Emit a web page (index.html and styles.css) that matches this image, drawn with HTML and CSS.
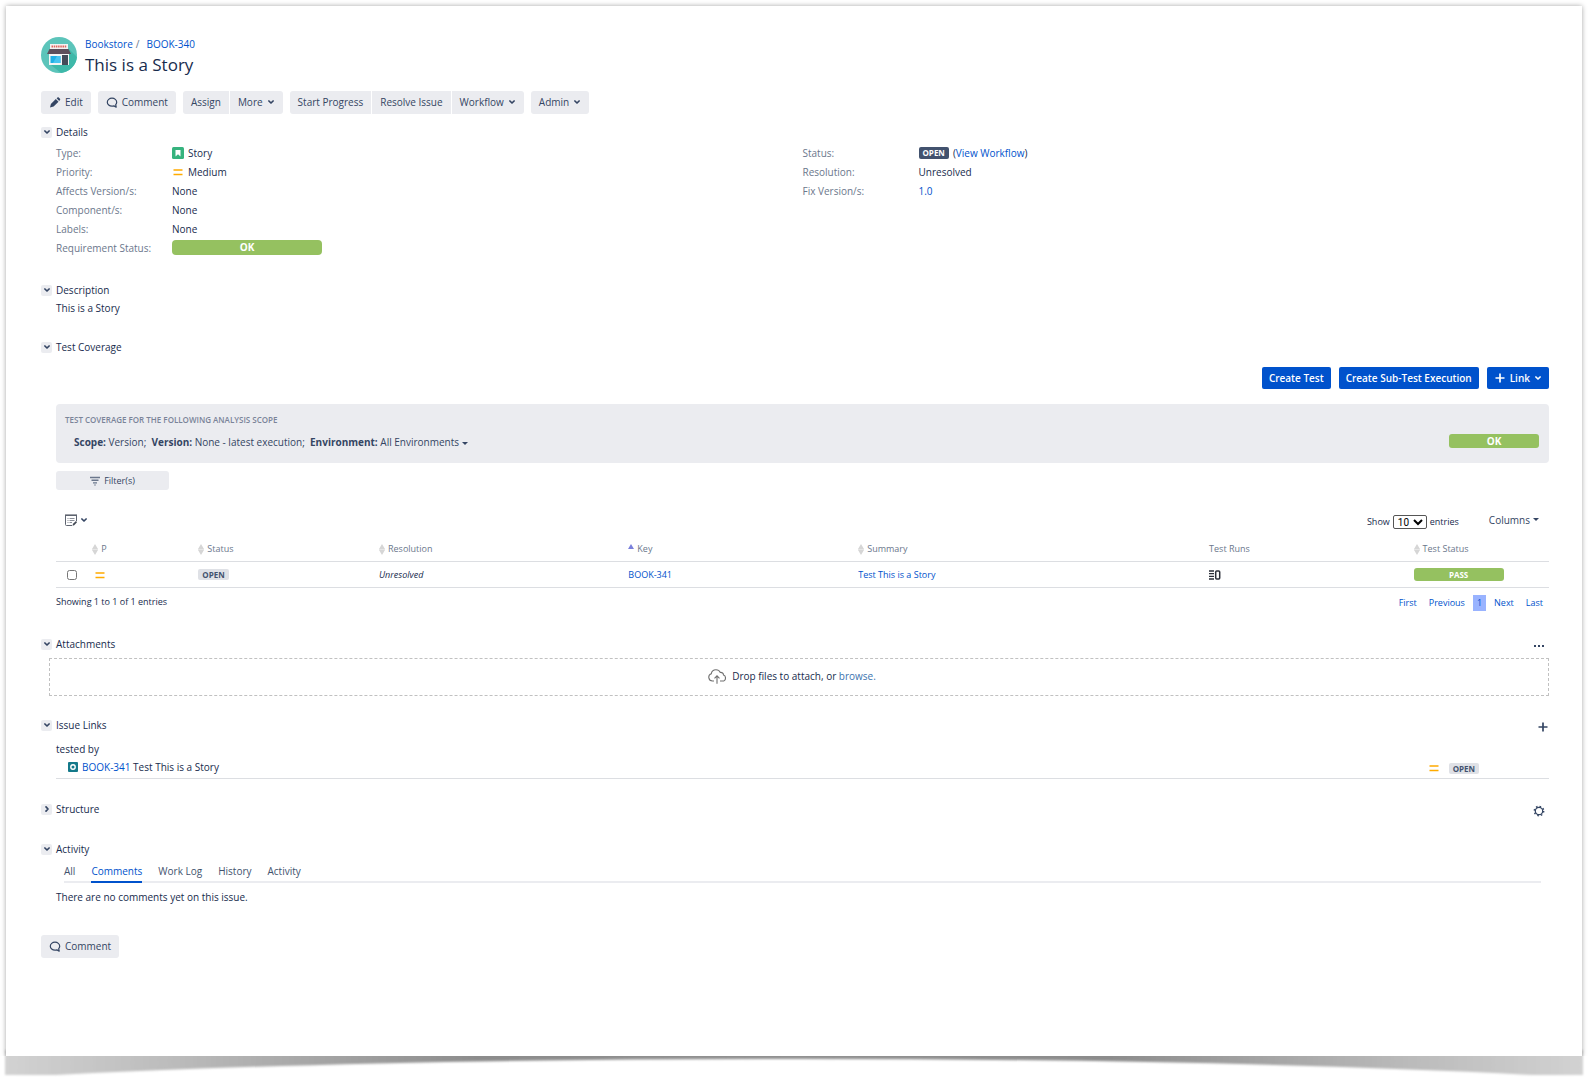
FILE: index.html
```html
<!DOCTYPE html>
<html lang="en">
<head>
  <meta charset="utf-8">
  <title>BOOK-340 This is a Story</title>
  <meta name="viewport" content="width=device-width, initial-scale=1.0">
  <link rel="stylesheet" href="styles.css">
</head>
<body>
  <!-- shared icons -->
  <svg class="sprite" aria-hidden="true">
    <symbol id="i-down" viewBox="0 0 8 8"><path d="M1.900 3 4 5l2.100-2" fill="none" stroke="currentColor" stroke-width="1.700" stroke-linecap="round" stroke-linejoin="round"/></symbol>
    <symbol id="i-right" viewBox="0 0 8 8"><path d="M3 1.900 5 4 3 6.100" fill="none" stroke="currentColor" stroke-width="1.700" stroke-linecap="round" stroke-linejoin="round"/></symbol>
    <symbol id="i-medium" viewBox="0 0 12 12"><path d="M1.500 4h9M1.500 8.500h9" stroke="#ffab00" stroke-width="1.500"/></symbol>
    <symbol id="i-comment" viewBox="0 0 12 12"><path d="M6 2.200c2.600 0 4.700 1.700 4.700 4 0 1-.4 1.800-1 2.500l.5 2.400-2.300-1.200c-.6.200-1.200.3-1.900.3-2.600 0-4.700-1.700-4.700-4s2.100-4 4.700-4z" fill="none" stroke="currentColor" stroke-width="1.200" stroke-linejoin="round"/></symbol>
    <symbol id="i-sort" viewBox="0 0 6 11"><path d="M3 0l3 5H0zM3 11l3-5H0z" fill="#d6d6d6"/><path d="M0 5.500h6" stroke="#e6e6e6"/></symbol>
    <symbol id="i-plus" viewBox="0 0 12 12"><path d="M6 1.500v9M1.500 6h9" stroke="currentColor" stroke-width="1.700"/></symbol>
  </svg>

  <div class="sheet">
    <header class="issue-header">
      <svg class="avatar" viewBox="0 0 36 36">
        <circle cx="18" cy="18" r="18" fill="#5cc4ba"/>
        <path d="M28 12l8 8a18 18 0 0 1-16 16l-10-8z" fill="#3eb8a9"/>
        <rect x="9" y="7" width="18" height="5" fill="#f2f2f2"/>
        <path d="M10.500 9.500h15" stroke="#e0645c" stroke-width="2" stroke-dasharray="1.500 .7"/>
        <rect x="8" y="16" width="20" height="12" fill="#f4f5f5"/>
        <path d="M8.500 12h19l2.500 5H6z" fill="#5d4f5c"/>
        <rect x="9.500" y="19" width="10" height="7" fill="#1fb0e6"/>
        <path d="M16 19h3.500v7H12z" fill="#48c4f0"/>
        <rect x="21" y="18" width="6" height="10" fill="#434b59"/>
      </svg>
      <div>
        <nav class="crumbs"><a href="#">Bookstore</a><span>/</span><a href="#">BOOK-340</a></nav>
        <h1>This is a Story</h1>
      </div>
    </header>

    <div class="toolbar">
      <div class="group">
        <button class="btn"><svg class="ic12" viewBox="0 0 12 12"><path d="M1 11.500l.9-3.600 4.900-4.900 2.700 2.700-4.900 4.900zM7.600 2.300l.9-.8c.4-.4.800-.4 1.200 0L11 2.800c.4.400.4.800 0 1.200l-.8.900z" fill="currentColor"/></svg>Edit</button>
      </div>
      <div class="group">
        <button class="btn"><svg class="ic12"><use href="#i-comment"/></svg>Comment</button>
      </div>
      <div class="group">
        <button class="btn">Assign</button>
        <button class="btn">More <svg class="ic8"><use href="#i-down"/></svg></button>
      </div>
      <div class="group">
        <button class="btn">Start Progress</button>
        <button class="btn">Resolve Issue</button>
        <button class="btn">Workflow <svg class="ic8"><use href="#i-down"/></svg></button>
      </div>
      <div class="group">
        <button class="btn">Admin <svg class="ic8"><use href="#i-down"/></svg></button>
      </div>
    </div>

    <section class="module details">
      <div class="module-head">
        <button class="toggle" aria-label="Toggle Details"><svg class="ic8"><use href="#i-down"/></svg></button>
        <h2>Details</h2>
      </div>
      <div class="module-body fields">
        <dl>
          <dt>Type:</dt>
          <dd><svg class="ic12" viewBox="0 0 12 12"><rect width="12" height="12" rx="1.500" fill="#36b37e"/><path d="M3.500 3h5v6.500L6 7.200 3.500 9.500z" fill="#fff"/></svg>Story</dd>
          <dt>Priority:</dt>
          <dd><svg class="ic12"><use href="#i-medium"/></svg>Medium</dd>
          <dt>Affects Version/s:</dt>
          <dd>None</dd>
          <dt>Component/s:</dt>
          <dd>None</dd>
          <dt>Labels:</dt>
          <dd>None</dd>
          <dt>Requirement Status:</dt>
          <dd><span class="bar bar-req">OK</span></dd>
        </dl>
        <dl>
          <dt>Status:</dt>
          <dd><span class="lozenge dark">OPEN</span><span>(<a href="#">View Workflow</a>)</span></dd>
          <dt>Resolution:</dt>
          <dd>Unresolved</dd>
          <dt>Fix Version/s:</dt>
          <dd><a href="#">1.0</a></dd>
        </dl>
      </div>
    </section>

    <section class="module description">
      <div class="module-head">
        <button class="toggle" aria-label="Toggle Description"><svg class="ic8"><use href="#i-down"/></svg></button>
        <h2>Description</h2>
      </div>
      <p class="module-body">This is a Story</p>
    </section>

    <section class="module coverage">
      <div class="module-head">
        <button class="toggle" aria-label="Toggle Test Coverage"><svg class="ic8"><use href="#i-down"/></svg></button>
        <h2>Test Coverage</h2>
      </div>
      <div class="module-body">
        <div class="actions">
          <button class="btn primary">Create Test</button>
          <button class="btn primary">Create Sub-Test Execution</button>
          <button class="btn primary"><svg class="ic12"><use href="#i-plus"/></svg>Link <svg class="ic8"><use href="#i-down"/></svg></button>
        </div>

        <div class="scope">
          <div>
            <h3>Test coverage for the following analysis scope</h3>
            <p><b>Scope:</b> Version;&nbsp; <b>Version:</b> None - latest execution;&nbsp; <b>Environment:</b> All Environments <i class="caret"></i></p>
          </div>
          <span class="bar">OK</span>
        </div>

        <button class="btn filter"><svg class="ic10" viewBox="0 0 10 10"><path d="M0 1.500h10M1.500 4.200h7M3 6.900h4" stroke="#6b778c" stroke-width="1.400"/><path d="M4.200 9h1.600" stroke="#6b778c"/></svg>Filter(s)</button>

        <div class="table-tools">
          <button class="plain" aria-label="Bulk actions">
            <svg class="ic12" viewBox="0 0 12 12"><path d="M7 11.500H1.500a1 1 0 0 1-1-1V1.500h11V7" fill="none" stroke="#5e6470"/><path d="M0 1.200h12" stroke="#5e6470" stroke-width="1.600"/><path d="M2.500 4.500h1M4.500 4.500h5M2.500 6.500h1M4.500 6.500h5M2.500 8.500h1M4.500 8.500h2.500" stroke="#8a8f99"/><path d="M7.500 11.800l.5-2 3-2.800 1 1.200-2.800 3z" fill="#444a55"/></svg>
            <svg class="ic8"><use href="#i-down"/></svg>
          </button>
          <div class="table-opts">
            <label>Show <select><option>10</option><option>25</option><option>50</option></select> entries</label>
            <button class="plain">Columns <i class="caret"></i></button>
          </div>
        </div>

        <table class="tests">
          <colgroup>
            <col class="c-check"><col class="c-p"><col class="c-status"><col class="c-res"><col class="c-key"><col class="c-sum"><col class="c-runs"><col>
          </colgroup>
          <thead>
            <tr>
              <th></th>
              <th><svg class="sort"><use href="#i-sort"/></svg>P</th>
              <th><svg class="sort"><use href="#i-sort"/></svg>Status</th>
              <th><svg class="sort"><use href="#i-sort"/></svg>Resolution</th>
              <th><svg class="sort" viewBox="0 0 6 11"><path d="M3 0l3 5H0z" fill="#7a80dc"/></svg>Key</th>
              <th><svg class="sort"><use href="#i-sort"/></svg>Summary</th>
              <th>Test Runs</th>
              <th><svg class="sort"><use href="#i-sort"/></svg>Test Status</th>
            </tr>
          </thead>
          <tbody>
            <tr>
              <td><input type="checkbox" aria-label="Select BOOK-341"></td>
              <td><svg class="ic12"><use href="#i-medium"/></svg></td>
              <td><span class="lozenge">OPEN</span></td>
              <td><em>Unresolved</em></td>
              <td><a href="#">BOOK-341</a></td>
              <td><a href="#">Test This is a Story</a></td>
              <td><svg class="ic12" viewBox="0 0 12 12"><path d="M0 2h5M0 4.700h5M0 7.400h5M0 10h5" stroke="#2b2f38" stroke-width="1.300"/><rect x="6.700" y="2" width="4" height="8" rx="1" fill="none" stroke="#2b2f38" stroke-width="1.500"/></svg></td>
              <td><span class="bar small">PASS</span></td>
            </tr>
          </tbody>
        </table>

        <div class="table-foot">
          <span>Showing 1 to 1 of 1 entries</span>
          <nav class="pager"><a href="#">First</a><a href="#">Previous</a><a href="#" class="current">1</a><a href="#">Next</a><a href="#">Last</a></nav>
        </div>
      </div>
    </section>

    <section class="module attachments">
      <div class="module-head">
        <button class="toggle" aria-label="Toggle Attachments"><svg class="ic8"><use href="#i-down"/></svg></button>
        <h2>Attachments</h2>
        <button class="plain op" aria-label="Attachment options"><svg class="ic12" viewBox="0 0 12 12"><path d="M1 6h2M5 6h2M9 6h2" stroke="currentColor" stroke-width="2"/></svg></button>
      </div>
      <div class="dropzone">
        <svg class="cloud" viewBox="0 0 18 15"><path d="M6 12H4.500A3.700 3.700 0 0 1 3.300 4.800C3.600 2.300 5.600.700 8 .7c2 0 3.500 1 4.200 2.700 2-.2 3.300 1 3.300 2.700 1.200.4 2 1.500 2 2.800 0 1.800-1.300 3.100-3 3.100H12M9 14.800V7M6.500 9.300 9 6.800l2.500 2.500" fill="none" stroke="#707070" stroke-width="1.100"/></svg>
        <span>Drop files to attach, or <a href="#">browse.</a></span>
      </div>
    </section>

    <section class="module links">
      <div class="module-head">
        <button class="toggle" aria-label="Toggle Issue Links"><svg class="ic8"><use href="#i-down"/></svg></button>
        <h2>Issue Links</h2>
        <button class="plain op edge" aria-label="Add link"><svg class="ic12"><use href="#i-plus"/></svg></button>
      </div>
      <div class="module-body">
        <h3>tested by</h3>
        <div class="link-row">
          <svg class="ic10" viewBox="0 0 10 10"><rect width="10" height="10" rx="1" fill="#14798a"/><circle cx="5" cy="5" r="2.200" fill="none" stroke="#fff" stroke-width="1.400"/></svg>
          <span><a href="#">BOOK-341</a> Test This is a Story</span>
          <div class="link-state">
            <svg class="ic12"><use href="#i-medium"/></svg>
            <span class="lozenge">OPEN</span>
          </div>
        </div>
      </div>
    </section>

    <section class="module structure">
      <div class="module-head">
        <button class="toggle" aria-label="Toggle Structure"><svg class="ic8"><use href="#i-right"/></svg></button>
        <h2>Structure</h2>
        <button class="plain op" aria-label="Structure settings"><svg class="ic12" viewBox="0 0 12 12"><circle cx="6" cy="6" r="3.700" fill="none" stroke="currentColor" stroke-width="1.200"/><circle cx="6" cy="6" r="4.700" fill="none" stroke="currentColor" stroke-width="1.400" stroke-dasharray="1.600 2.090"/></svg></button>
      </div>
    </section>

    <section class="module activity">
      <div class="module-head">
        <button class="toggle" aria-label="Toggle Activity"><svg class="ic8"><use href="#i-down"/></svg></button>
        <h2>Activity</h2>
      </div>
      <div class="module-body">
        <nav class="tabs"><a href="#">All</a><a href="#" class="active">Comments</a><a href="#">Work Log</a><a href="#">History</a><a href="#">Activity</a></nav>
        <p>There are no comments yet on this issue.</p>
      </div>
    </section>

    <button class="btn"><svg class="ic12"><use href="#i-comment"/></svg>Comment</button>
  </div>

  <!-- lifted page shadow -->
  <svg class="curl" viewBox="0 0 1576 29" preserveAspectRatio="none" aria-hidden="true">
    <defs>
      <linearGradient id="curl-fill">
        <stop offset="0" stop-color="#d2d2d2"/>
        <stop offset=".1" stop-color="#bdbdbd"/>
        <stop offset=".3" stop-color="#8c8c8c"/>
        <stop offset=".5" stop-color="#929292"/>
        <stop offset=".7" stop-color="#8c8c8c"/>
        <stop offset=".9" stop-color="#bdbdbd"/>
        <stop offset="1" stop-color="#d2d2d2"/>
      </linearGradient>
      <filter id="soft" x="-1%" y="-40%" width="102%" height="180%"><feGaussianBlur stdDeviation="1.300"/></filter>
    </defs>
    <path d="M-1 -6H1577V19H1526Q1216 3 788 3Q360 3 50 19H-1z" fill="url(#curl-fill)" filter="url(#soft)"/>
  </svg>
</body>
</html>
```
FILE: styles.css
```css
* {
  box-sizing: border-box;
}
body {
  margin: 0;
  padding: 6px 14px 0 6px;
  background: #fff;
  font-family: "Open Sans", "Noto Sans", sans-serif;
  font-size: 10px;
  line-height: 18px;
  color: #172b4d;
}
h1, h2, h3, p, dl, dd {
  margin: 0;
}
a {
  color: #0052cc;
  text-decoration: none;
}
svg {
  flex: none;
}
.sprite {
  position: absolute;
  width: 0;
  height: 0;
}
.ic8 { width: 8px; height: 8px; }
.ic10 { width: 10px; height: 10px; }
.ic12 { width: 12px; height: 12px; }

.sheet {
  position: relative;
  z-index: 1;
  padding: 31px 33px 98px 35px;
  background: #fff;
  box-shadow: 0 0 5px rgba(0, 0, 0, 0.35);
  clip-path: inset(-6px -6px 0 -6px);
}
.curl {
  display: block;
  width: 100%;
  height: 29px;
  overflow: visible;
}

/* header */
.issue-header {
  display: flex;
  gap: 8px;
}
.avatar {
  width: 36px;
  height: 36px;
}
.crumbs {
  display: flex;
  gap: 3px;
  line-height: 14px;
}
.crumbs span {
  color: #6b778c;
}
.crumbs a:last-child {
  margin-left: 4px;
}
h1 {
  font-size: 17px;
  font-weight: 500;
  line-height: 28px;
}

/* buttons */
.btn {
  display: inline-flex;
  align-items: center;
  justify-content: center;
  gap: 4px;
  height: 23px;
  padding: 0 8px 2px;
  border: 0;
  border-radius: 3px;
  background: #ebecf0;
  font: inherit;
  color: #344563;
  cursor: pointer;
}
.btn.primary {
  height: 22px;
  padding: 0 7px;
  border-radius: 2px;
  background: #0052cc;
  color: #fff;
  font-weight: 600;
}
.plain {
  display: inline-flex;
  align-items: center;
  gap: 3px;
  padding: 0;
  border: 0;
  background: none;
  font: inherit;
  color: #344563;
  cursor: pointer;
}
.toolbar {
  display: flex;
  gap: 7px;
  margin-top: 12px;
}
.group {
  display: flex;
  gap: 1px;
}
.group .btn:not(:first-child) {
  border-top-left-radius: 0;
  border-bottom-left-radius: 0;
}
.group .btn:not(:last-child) {
  border-top-right-radius: 0;
  border-bottom-right-radius: 0;
}

/* modules */
.module-head {
  display: flex;
  align-items: center;
  gap: 4px;
}
.module-head h2 {
  font-size: 10px;
  font-weight: 500;
}
.toggle {
  display: flex;
  align-items: center;
  justify-content: center;
  width: 11px;
  height: 11px;
  padding: 0;
  border: 0;
  border-radius: 2px;
  background: #ebecf0;
  color: #344563;
}
.op {
  margin-left: auto;
  margin-right: 4px;
  padding-top: 4px;
}
.op.edge {
  margin-right: 0;
}
.module-body {
  margin-left: 15px;
}
.details {
  margin-top: 9px;
}
.description {
  margin-top: 24px;
}
.coverage {
  margin-top: 21px;
}
.attachments {
  margin-top: 23px;
}
.links {
  margin-top: 20px;
}
.structure {
  margin-top: 21px;
}
.activity {
  margin-top: 22px;
  margin-bottom: 29px;
}

.fields {
  display: grid;
  grid-template-columns: 1fr 1fr;
  align-items: start;
  padding-top: 2px;
}
.fields dl {
  display: grid;
  grid-template-columns: 116px 1fr;
  grid-auto-rows: 19px;
  align-items: center;
}
.fields dt {
  color: #6b778c;
}
.fields dd {
  display: flex;
  align-items: center;
  gap: 4px;
}

.lozenge {
  display: inline-block;
  padding: 0 4px;
  border-radius: 2px;
  background: #dfe1e6;
  color: #42526e;
  font-size: 8px;
  font-weight: 700;
  line-height: 11px;
}
.lozenge.dark {
  background: #42526e;
  color: #fff;
  line-height: 12px;
}
.bar {
  display: block;
  width: 90px;
  border-radius: 3px;
  background: #95c160;
  color: #fff;
  font-weight: 700;
  line-height: 14px;
  text-align: center;
}
.bar.bar-req {
  width: 150px;
  border-radius: 4px;
  line-height: 15px;
}
.bar.small {
  font-size: 8px;
  line-height: 13px;
}
.caret {
  display: inline-block;
  border: 3px solid transparent;
  border-top-color: currentColor;
  border-bottom: 0;
  vertical-align: middle;
}

/* test coverage */
.actions {
  display: flex;
  justify-content: flex-end;
  gap: 8px;
  margin-top: 11px;
}
.scope {
  display: flex;
  align-items: flex-start;
  justify-content: space-between;
  margin-top: 15px;
  padding: 9px 10px 12px 9px;
  border-radius: 4px;
  background: #ebecf0;
  color: #344563;
}
.scope h3 {
  color: #7a8499;
  font-size: 8px;
  font-weight: 600;
  line-height: 14px;
  text-transform: uppercase;
}
.scope p {
  padding: 6px 0 0 9px;
}
.scope .bar {
  margin-top: 21px;
}
.btn.filter {
  width: 113px;
  height: 19px;
  margin-top: 8px;
  padding-bottom: 0;
  font-size: 9px;
}
.table-tools {
  display: flex;
  align-items: flex-start;
  justify-content: space-between;
  margin-top: 20px;
  padding: 0 10px 0 9px;
}
.table-tools .plain {
  height: 18px;
}
.table-opts {
  display: flex;
  gap: 30px;
}
.table-opts label {
  display: flex;
  align-items: center;
  gap: 3px;
  padding-top: 2px;
  font-size: 9px;
}
.table-opts select {
  width: 34px;
  height: 14px;
  padding: 0;
  border: 1px solid #555;
  border-radius: 2px;
  background: #fff;
  font-family: Roboto, sans-serif;
  font-size: 10px;
  color: #000;
}
.tests {
  width: 100%;
  border-collapse: collapse;
  table-layout: fixed;
  font-size: 9px;
}
.c-check { width: 2.1%; }
.c-p { width: 7.1%; }
.c-status { width: 12.1%; }
.c-res { width: 16.7%; }
.c-key { width: 15.4%; }
.c-sum { width: 23.5%; }
.c-runs { width: 13.7%; }
.tests th,
.tests td {
  height: 26px;
  padding: 0 0 0 5px;
  border-bottom: 1px solid #dcdee2;
  text-align: left;
}
.tests th {
  height: 31px;
  padding-top: 6px;
  color: #6b778c;
  font-weight: 500;
}
.tests td:first-child {
  padding-left: 11px;
}
.tests td:nth-child(2) {
  padding-left: 7px;
}
.tests svg,
.tests input {
  vertical-align: middle;
}
.tests input {
  width: 10px;
  height: 10px;
  margin: 0;
}
.sort {
  width: 6px;
  height: 11px;
  margin-right: 3px;
}
.table-foot {
  display: flex;
  align-items: flex-start;
  justify-content: space-between;
  margin-top: 6px;
  font-size: 9px;
}
.table-foot > span {
  line-height: 16px;
}
.pager {
  display: flex;
  padding: 1px 2px 1px 0;
}
.pager a {
  padding: 0 4px;
  margin-left: 4px;
  line-height: 16px;
}
.pager .current {
  background: #99b3ff;
}

.dropzone {
  display: flex;
  align-items: center;
  justify-content: center;
  gap: 6px;
  height: 38px;
  margin: 5px 0 0 8px;
  padding: 0 14px 2px 0;
  border: 1px dashed #c1c1c1;
}
.dropzone a {
  color: #3b73af;
}
.cloud {
  width: 18px;
  height: 15px;
}

.links h3 {
  padding-top: 6px;
  font-size: 10px;
  font-weight: 500;
}
.link-row {
  display: flex;
  align-items: center;
  gap: 4px;
  height: 21px;
  padding: 0 70px 3px 12px;
  border-bottom: 1px solid #dcdee2;
}
.link-state {
  display: flex;
  align-items: center;
  gap: 9px;
  margin-left: auto;
  padding-top: 3px;
}

.tabs {
  display: flex;
  gap: 16px;
  margin: 3px 8px 5px;
  border-bottom: 2px solid #ebecf0;
}
.tabs a {
  margin-bottom: -2px;
  border-bottom: 2px solid transparent;
  line-height: 20px;
  color: #42526e;
}
.tabs .active {
  border-bottom-color: #0052cc;
  color: #0052cc;
}
```
